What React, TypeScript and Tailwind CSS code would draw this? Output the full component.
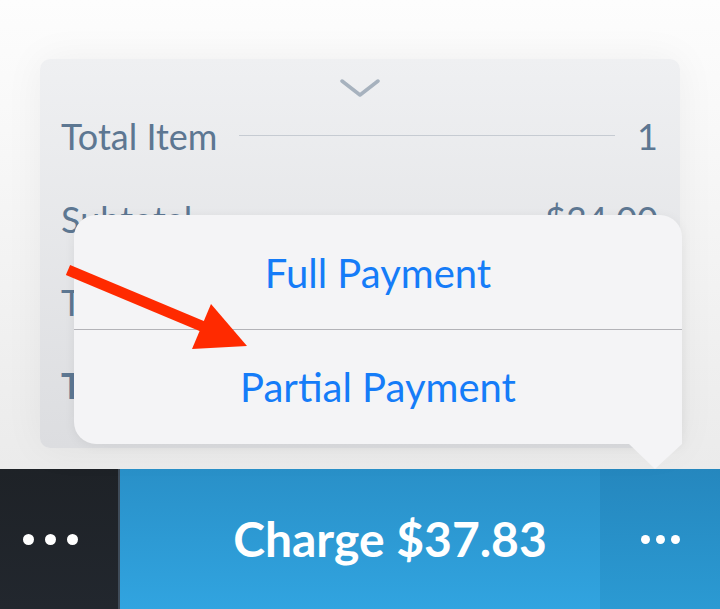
import React from "react";

const font = { fontFamily: "Lato, 'Noto Sans', sans-serif" };

function Row({ label, value, bold, line }: { label: string; value: string; bold?: boolean; line?: boolean }) {
  return (
    <div className={`flex h-[85px] items-start text-[36px] leading-[40px] ${bold ? "font-bold" : "font-normal"} text-[#5d7792]`}>
      <span>{label}</span>
      {line ? (
        <div className="mx-[22px] mt-[19px] h-px flex-1 bg-[#c6cbd2]" />
      ) : (
        <div className="flex-1" />
      )}
      <span>{value}</span>
    </div>
  );
}

function Dots({ size, gap }: { size: string; gap: string }) {
  return (
    <div className={`flex items-center ${gap}`}>
      <span className={`${size} rounded-full bg-white`} />
      <span className={`${size} rounded-full bg-white`} />
      <span className={`${size} rounded-full bg-white`} />
    </div>
  );
}

export default function App() {
  return (
    <div className="flex h-[609px] w-[720px] flex-col overflow-hidden" style={font}>
      <div className="relative flex h-[469px] flex-col bg-gradient-to-b from-[#fdfdfd] to-[#ebebeb] px-[40px] pt-[59px]">
        <div className="flex h-[389px] flex-col rounded-[10px] bg-gradient-to-b from-[#eff0f2] to-[#dcdde0] px-[21px] pr-[22px] shadow-[0_0_40px_rgba(0,0,0,0.05)]">
          <div className="flex h-[58px] items-start justify-center pt-[19px]">
            <svg width="40" height="20" viewBox="0 0 40 20">
              <polyline points="2,3 20,17 38,3" fill="none" stroke="#a7b2be" strokeWidth="3.5" strokeLinecap="round" strokeLinejoin="round" />
            </svg>
          </div>
          <Row label="Total Item" value="1" line />
          <Row label="Subtotal" value="$34.00" />
          <Row label="Tax" value="$3.83" />
          <Row label="Total" value="$37.83" bold />
        </div>

        <div className="absolute left-[74px] top-[215px] flex h-[229px] w-[608px] flex-col rounded-[22px] rounded-br-none bg-[#f4f4f6] shadow-[0_2px_12px_rgba(0,0,0,0.06)]">
          <div className="flex h-[114px] items-center justify-center pt-[2px] text-[40px] text-[#157cf8]">
            Full Payment
          </div>
          <div className="h-px bg-[#b3b3b8]" />
          <div className="flex flex-1 items-center justify-center text-[40px] text-[#157cf8]">
            Partial Payment
          </div>
          <svg className="absolute right-0 top-full" width="53" height="25" viewBox="0 0 53 25">
            <polygon points="0,0 53,0 26,25" fill="#f4f4f6" />
          </svg>
        </div>

        <svg className="absolute left-0 top-0" width="720" height="469" viewBox="0 0 720 469">
          <line x1="68" y1="270" x2="204" y2="327" stroke="#ff2a00" strokeWidth="11" />
          <polygon points="211,304 192,349 247,346" fill="#ff2a00" />
        </svg>
      </div>

      <div className="flex h-[140px]">
        <div className="flex w-[118px] items-center justify-center bg-gradient-to-b from-[#1e2227] to-[#22272e] pr-[18px]">
          <Dots size="h-[11px] w-[11px]" gap="gap-[11px]" />
        </div>
        <div className="w-[2px] bg-[#3f4b58]" />
        <div className="flex w-[480px] items-center justify-center bg-gradient-to-b from-[#2990c8] to-[#31a4e0] pl-[60px] text-[48px] font-bold text-white">
          Charge $37.83
        </div>
        <div className="flex flex-1 items-center justify-center bg-gradient-to-b from-[#2587be] to-[#2b9ad3]">
          <Dots size="h-[9px] w-[9px]" gap="gap-[6px]" />
        </div>
      </div>
    </div>
  );
}
